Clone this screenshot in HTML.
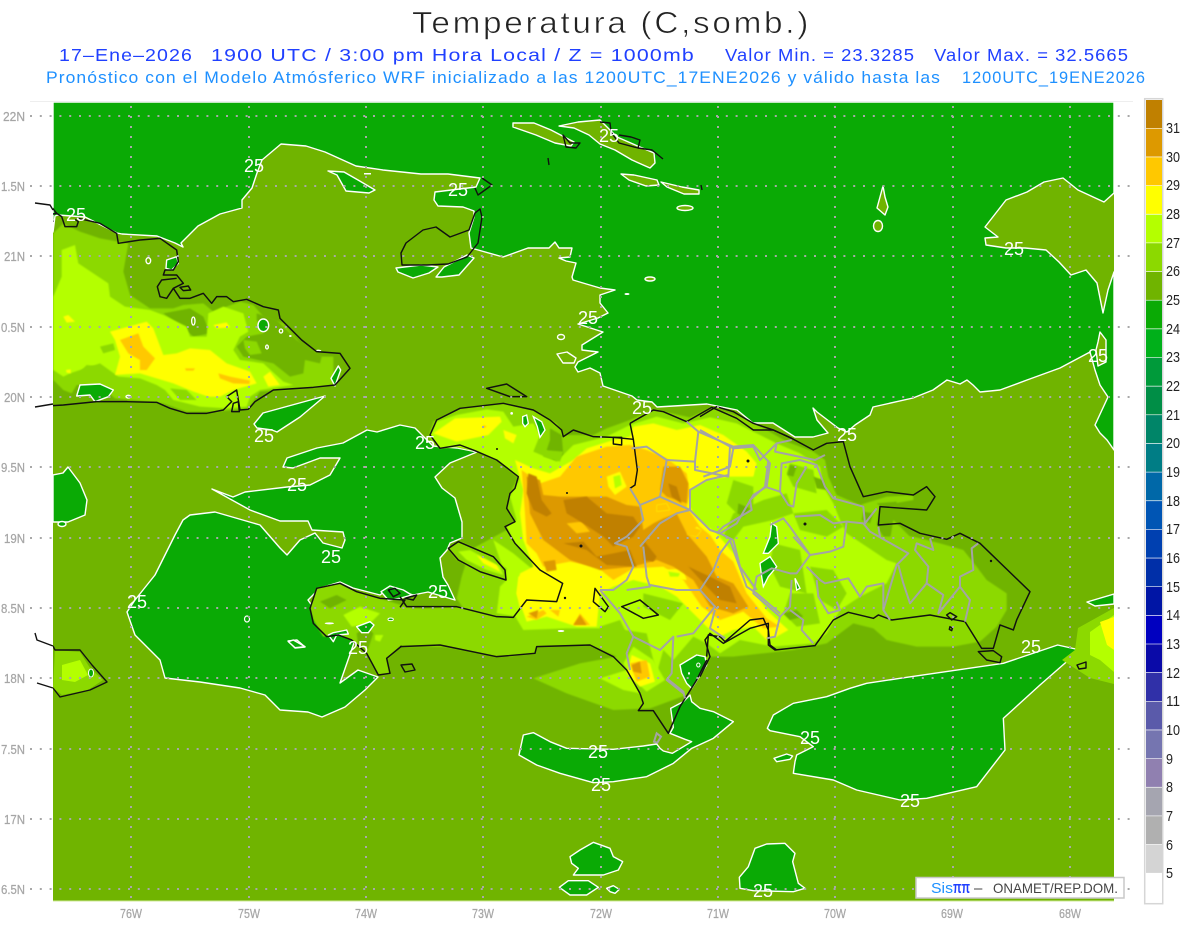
<!DOCTYPE html>
<html><head><meta charset="utf-8"><title>Temperatura</title>
<style>
html,body{margin:0;padding:0;background:#fff;width:1200px;height:927px;overflow:hidden}
svg{display:block}
text{font-family:"Liberation Sans",sans-serif}
.a{fill:#70b400}.b{fill:#8cd900}.c{fill:#b4ff00}.d{fill:#ffff00}.e{fill:#ffc800}.f{fill:#dd9900}.g{fill:#c08000}.h{fill:#0aaa05}
.z .a,.z .b,.z .c,.z .d,.z .e,.z .f,.z .g{filter:url(#s)}
.w{fill:#0aaa05;stroke:#fff;stroke-width:1.4;stroke-linejoin:round}
.wa{fill:#70b400;stroke:#fff;stroke-width:1.4;stroke-linejoin:round}
.z .w,.z .wa{stroke-width:4.2}
.k{fill:none;stroke:#111;stroke-width:1.4;stroke-linejoin:round}
.z .k{stroke-width:4.4}
.gr{fill:none;stroke:#a4a4a4;stroke-width:6;stroke-linejoin:round}
.l{fill:#fff;font-size:18px;text-anchor:middle}
.y{fill:#a6a6a6;font-size:13px;stroke:#a6a6a6;stroke-width:.25}
.n{fill:#222;font-size:15px}
</style></head><body>
<svg width="1200" height="927" viewBox="0 0 1200 927" xmlns="http://www.w3.org/2000/svg">
<defs><clipPath id="m"><rect x="53" y="102" width="1061" height="799"/></clipPath>
<filter id="s" x="-5%" y="-5%" width="110%" height="110%"><feGaussianBlur stdDeviation="2"/></filter></defs>

<text x="412" y="33" font-size="31" fill="#222" stroke="#fff" stroke-width=".6" letter-spacing="2.5" textLength="399" lengthAdjust="spacingAndGlyphs">Temperatura (C,somb.)</text>
<g fill="#2040ff" font-size="17.5" letter-spacing="1">
<text x="59" y="61" textLength="134" lengthAdjust="spacingAndGlyphs">17–Ene–2026</text>
<text x="211" y="61" textLength="484" lengthAdjust="spacingAndGlyphs">1900 UTC / 3:00 pm Hora Local / Z = 1000mb</text>
<text x="725" y="61" textLength="190" lengthAdjust="spacingAndGlyphs">Valor Min. = 23.3285</text>
<text x="934" y="61" textLength="195" lengthAdjust="spacingAndGlyphs">Valor Max. = 32.5665</text>
</g>
<g fill="#1e90ff" font-size="16.5" letter-spacing="1">
<text x="46" y="83" textLength="895" lengthAdjust="spacingAndGlyphs">Pronóstico con el Modelo Atmósferico WRF inicializado a las 1200UTC_17ENE2026 y válido hasta las</text>
<text x="962" y="83" textLength="184" lengthAdjust="spacingAndGlyphs">1200UTC_19ENE2026</text>
</g>

<rect x="30" y="101" width="1103" height="1" fill="#eeeeee"/>
<g clip-path="url(#m)">
<rect x="53" y="102" width="1061" height="799" class="a"/>

<!-- top green -->
<path class="w" d="M53,102 L1114,102 1114,193 1104,202 1078,190 1063,178 1044,182 1027,192 1006,200 985,227 998,237 985,238 986,245 1006,248 1025,248 1046,250 1059,262 1071,275 1086,270 1097,283 1103,313 1108,290 1114,272 1114,450 1107,440 1100,433 1095,425 1108,397 1100,385 1095,370 1090,352 1060,368 1027,380 1000,390 980,392 973,385 967,380 960,384 947,380 933,390 913,398 873,407 870,415 855,425 847,432 838,428 817,412 813,408 817,420 828,433 813,437 795,437 773,423 753,423 737,410 707,404 657,407 652,402 637,400 632,396 603,386 600,373 590,368 578,372 575,367 578,362 598,352 582,350 582,345 603,332 578,324 598,318 608,313 600,303 600,295 615,290 600,288 583,283 573,280 572,277 576,263 566,261 559,258 570,257 572,248 559,248 555,242 549,248 528,248 503,257 471,248 469,233 474,217 474,211 463,207 438,206 434,200 435,192 476,187 480,178 448,174 421,174 383,170 356,166 325,152 306,146 281,144 262,160 257,173 252,188 242,200 242,208 220,214 198,226 181,243 183,247 175,243 157,236 122,234 117,233 85,217 58,215 55,216 53,232 Z"/>

<!-- olive islets in green -->
<path class="wa" d="M513,123 534,123 551,130 574,142 571,146 555,143 536,135 513,127Z"/>
<path class="wa" d="M559,126 578,122 600,120 617,137 640,147 654,153 655,163 650,168 632,160 615,150 600,144 589,135 574,128Z"/>
<path class="wa" d="M621,174 634,175 657,180 659,185 646,186 629,180Z"/>
<path class="wa" d="M661,182 682,187 699,190 699,194 684,194 667,187Z"/>
<ellipse class="wa" cx="685" cy="208" rx="8" ry="2.5"/>
<path class="wa" d="M883,186 885,197 888,207 885,215 877,208 880,197Z"/>
<ellipse class="wa" cx="878" cy="226" rx="4.5" ry="5.5"/>
<ellipse class="wa" cx="650" cy="279" rx="5" ry="2"/>
<ellipse class="wa" cx="561" cy="337" rx="3.5" ry="2.5"/>
<path class="wa" d="M557,354 567,352 576,358 574,363 563,363Z"/>
<path class="wa" d="M1100,332 1106,340 1106,362 1098,366 1096,350 1098,342Z"/>
<ellipse cx="627" cy="294" rx="2.5" ry="1" fill="#fff"/>
<rect x="364" y="173" width="7" height="1.5" fill="#fff"/>

<!-- green in olive, north -->
<path class="w" d="M328,171 344,172 358,180 375,190 369,193 346,191 337,175Z"/>
<path class="w" d="M396,268 421,265 438,267 429,273 413,278 398,272Z"/>
<path class="w" d="M436,277 444,267 467,255 474,258 459,275 442,277Z"/>
<path class="w" d="M53,475 63,473 68,467 80,483 87,500 85,515 68,522 53,522Z"/>
<ellipse class="wa" cx="62" cy="524" rx="4" ry="2.5" style="fill:#0aaa05"/>
<path class="w" d="M254,424 263,413 325,396 300,417 277,432 272,430 257,428Z"/>

<!-- SW large green -->
<path class="w" d="M400,425 415,428 433,446 457,448 477,452 450,463 435,477 442,488 455,498 462,522 462,538 450,543 447,550 440,558 443,577 448,585 455,600 428,592 413,595 390,587 380,595 353,588 340,582 320,588 308,600 315,610 333,610 348,623 363,627 373,622 363,632 355,640 348,660 340,683 358,670 378,677 365,690 345,707 322,717 308,712 280,710 265,695 240,688 200,682 165,678 160,660 135,635 127,612 135,600 155,575 175,535 183,520 190,515 215,512 260,525 280,548 287,555 300,540 315,533 323,543 342,548 345,540 343,532 312,530 308,521 280,521 250,510 212,489 233,497 245,492 287,487 310,485 330,475 340,458 320,458 293,468 283,467 287,458 317,448 343,443 367,430 377,432Z"/>
<path class="wa" d="M288,641 297,640 305,647 295,648Z"/>
<ellipse cx="247" cy="619" rx="2.5" ry="3" fill="none" stroke="#fff" stroke-width="1.2"/>

<!-- SE green lobes, zoom12 coords -->
<g class="z" transform="translate(500,640) scale(.33333)">
<path class="w" d="M57,345 70,285 100,278 150,305 200,325 340,328 430,318 470,312 480,325 490,333 517,340 575,305 555,298 510,280 520,262 512,205 550,185 570,165 575,185 600,205 640,215 700,245 640,295 575,325 520,370 440,410 340,425 280,428 180,400 110,375Z"/>
<path class="w" d="M802,265 820,225 880,190 980,170 1050,145 1100,130 1200,115 1510,70 1673,15 1740,30 1620,135 1510,235 1515,330 1430,440 1280,475 1200,480 1070,450 1000,420 880,400 885,365 890,345 940,320 900,290 810,272Z"/>
<path class="w" d="M822,355 860,342 878,348 870,358 830,365Z"/>
<path class="w" d="M210,650 240,630 280,607 330,625 340,650 368,665 355,690 310,705 220,705 235,685 215,670Z"/>
<path class="w" d="M178,742 205,722 265,722 295,742 260,765 210,765Z"/>
<path class="w" d="M320,745 340,737 358,748 345,760 330,755Z"/>
<path class="w" d="M765,625 800,612 855,610 885,640 878,665 895,730 915,745 880,755 760,752 720,745 718,712 745,680Z"/>
</g>

<!-- NE bottom right coloured -->
<path class="w" d="M1087,602 1114,594 1114,604 1095,606Z"/>
<path class="b" d="M1078,628 1114,608 1114,684 1090,678 1062,660 1075,650Z"/>
<path class="c" d="M1090,632 1114,615 1114,672 1100,660 1090,655Z"/>
<path class="d" d="M1100,622 1114,617 1114,650 1107,645Z"/>
<path class="k" d="M1077,665 1086,662 1086,668 1079,669Z"/>

<!-- Jamaica -->
<path class="b" d="M55,650 80,652 90,668 103,680 88,690 62,695 53,688Z"/>
<path class="c" d="M62,665 80,660 88,675 75,682 62,680Z"/>
<ellipse cx="91" cy="673" rx="2.5" ry="4" fill="#0aaa05" stroke="#fff"/>

<!-- Cuba, zoom 8 coords -->
<g class="z" transform="translate(0,200) scale(.33333)">
<path class="b" d="M160,100 190,70 240,95 300,115 385,130 370,215 390,285 450,325 520,325 550,315 610,310 640,335 720,305 760,315 790,350 850,370 900,430 960,470 1000,470 1000,555 930,565 780,575 745,625 650,635 560,635 490,610 400,600 345,595 300,555 230,555 215,580 190,570 160,540Z"/>
<path class="a" d="M490,340 540,375 580,410 630,400 610,350 570,325Z"/>
<path class="a" d="M770,340 830,360 890,420 965,470 960,490 915,480 910,520 870,530 820,490 730,470 710,440 740,410 790,400 770,360Z"/>
<path class="c" d="M185,150 225,135 235,190 325,250 330,290 375,320 450,330 490,345 560,380 570,410 620,410 625,340 670,320 730,340 745,395 720,410 700,450 720,480 790,490 850,545 880,555 780,570 750,590 740,620 680,625 600,620 520,600 495,570 470,555 420,535 355,530 300,490 240,510 210,520 190,530 160,510 160,290 185,230Z"/>
<path class="b" d="M300,440 340,430 345,450 310,460Z M730,420 770,425 785,460 750,465 735,445Z M510,565 560,570 590,600 540,600Z M195,540 230,525 260,495 300,500 270,525 220,545Z"/>
<path class="d" d="M330,395 440,365 460,385 490,465 530,460 570,445 630,450 680,490 750,515 770,550 700,570 660,590 625,590 580,575 520,550 470,535 420,520 345,525 360,470 345,420Z M190,350 205,345 225,365 200,368Z M640,375 680,367 690,382 650,385Z M790,530 810,515 840,555 805,560Z M198,510 212,508 212,520 200,518Z"/>
<path class="e" d="M360,420 415,400 430,440 465,475 440,510 420,510 420,480 385,460Z M655,520 690,530 750,542 748,552 700,550 660,535Z M555,505 585,505 580,512 558,512Z"/>
<path class="w" d="M230,588 240,555 300,552 340,570 325,590 285,605 270,585Z"/>
<ellipse class="w" cx="790" cy="376" rx="16" ry="19"/>
<path class="w" d="M1015,498 1022,510 1005,558 993,535Z"/>
<g fill="none" stroke="#fff" stroke-width="4">
<ellipse cx="445" cy="182" rx="7" ry="9"/><ellipse cx="580" cy="363" rx="5" ry="12"/><ellipse cx="843" cy="393" rx="5" ry="6"/><ellipse cx="801" cy="441" rx="4" ry="6"/><ellipse cx="385" cy="590" rx="7" ry="4"/>
</g>
<ellipse cx="871" cy="408" rx="4" ry="3" fill="#fff"/><ellipse cx="955" cy="452" rx="9" ry="3" fill="#fff"/>
<path class="w" d="M500,180 530,170 535,190 515,210 498,205Z"/>
</g>

<!-- Gulf & Tiburon, zoom 10 coords -->
<g class="z" transform="translate(280,520) scale(.33333)">
<path class="b" d="M570,90 680,30 720,90 800,150 850,190 830,245 740,240 700,290 620,290 560,280 530,235 545,170Z"/>
<path class="c" d="M640,60 700,100 760,150 850,190 830,245 750,240 710,290 650,280 660,200 680,180Z"/>
<path class="d" d="M715,170 770,150 845,190 840,240 760,240 725,290 710,220Z"/>
<path class="b" d="M90,265 110,205 180,190 230,215 300,235 385,262 570,285 700,295 750,370 770,385 690,410 500,380 360,380 320,420 330,460 295,465 260,400 215,360 180,345 130,350 100,300Z"/>
<path class="c" d="M420,270 500,285 570,290 700,300 745,370 700,345 600,320 560,290 500,295 430,310Z M190,285 240,260 300,280 270,310 215,320Z M285,345 310,345 300,365 285,360Z M590,300 640,310 720,350 640,330 600,320Z"/>
<path class="a" d="M510,300 550,305 545,320 515,318Z M620,340 700,360 640,365Z M120,245 170,225 200,240 150,265Z M230,340 260,320 280,340 260,400 235,380Z"/>
<path class="w" d="M415,332 465,330 448,365 430,360Z"/>
<path class="w" d="M145,345 160,338 200,330 205,342 170,345 160,365Z"/>
<path class="w" d="M230,320 270,305 282,315 265,338 245,338Z"/>
<path class="w" d="M25,365 40,360 75,380 45,383Z"/>
<ellipse cx="332" cy="298" rx="8" ry="4" fill="#0aaa05" stroke="#fff" stroke-width="3"/>
<ellipse cx="148" cy="310" rx="14" ry="3" fill="#fff"/>
<path class="w" d="M303,215 330,198 370,210 395,225 360,235 325,240Z"/>
<!-- Gonave -->
<path class="b" d="M505,85 540,65 585,85 680,145 678,178 600,155 530,120Z"/>
<path class="c" d="M535,95 570,90 660,140 670,165 620,150 560,120Z"/>
<path class="d" d="M590,105 650,135 660,155 610,130Z"/>
</g>

<!-- Hispaniola zoom 3 coords -->
<g class="z" transform="translate(400,380) scale(.33333)">
<!-- 26-27 hull -->
<path class="b" d="M85,170 100,125 180,85 320,70 400,90 470,130 490,165 580,165 620,145 690,120 760,88 870,112 935,82 1020,110 1100,150 1160,185 1240,215 1275,240 1285,290 1310,345 1380,375 1395,370 1460,350 1540,345 1540,360 1440,378 1430,435 1440,470 1540,470 1620,490 1690,510 1730,560 1760,600 1820,640 1820,690 1790,740 1740,785 1660,800 1550,800 1460,780 1420,745 1360,730 1280,790 1180,810 1000,830 930,830 905,880 860,945 750,985 640,990 500,940 400,895 540,850 650,830 570,795 410,800 405,820 290,830 130,800 0,790 0,690 170,680 345,712 380,660 470,665 488,610 420,570 345,490 315,440 345,425 320,385 330,340 355,290 290,240 225,212 170,200 120,205Z"/>
<path class="c" d="M600,895 680,870 720,940 670,930Z"/>
<path class="a" d="M450,145 485,165 490,225 460,240 440,210 450,180Z M1430,370 1490,365 1490,380 1440,378Z"/>
<!-- 27-28 main -->
<path class="c" d="M90,170 110,125 170,105 260,88 310,95 340,140 400,130 420,165 400,215 470,245 520,195 620,170 690,135 770,110 850,130 930,112 1010,130 1080,165 1130,190 1200,220 1260,260 1270,320 1300,370 1320,420 1340,460 1460,540 1490,550 1460,610 1380,650 1320,690 1280,760 1240,790 1120,800 1020,780 960,820 920,790 880,770 820,840 790,810 770,880 740,760 640,745 500,745 370,750 340,700 370,680 370,620 430,575 345,490 320,440 350,420 330,350 360,295 290,240 225,212 170,200 120,205Z"/>
<path class="c" d="M700,800 760,840 795,900 740,935 695,895 670,850Z"/>
<!-- 26-27 patches over 27-28 -->
<path class="b" d="M1000,300 1060,320 1060,390 1020,410 980,370Z M1090,360 1160,340 1180,400 1120,420 1030,440 1000,480 970,470 1000,400Z M1170,250 1240,270 1250,340 1180,320 1160,280Z M1180,400 1280,390 1330,440 1280,470 1200,450Z M1340,400 1420,420 1450,470 1500,520 1440,500 1360,460 1330,430Z M1480,420 1530,470 1540,520 1470,480Z M1120,490 1200,510 1220,640 1140,620 1110,560Z M1170,640 1240,640 1260,730 1190,740 1150,700Z M430,210 490,215 480,245 430,230Z M600,740 660,720 680,760 600,770Z M730,640 850,670 810,720 730,680Z M1230,560 1300,570 1340,640 1310,690 1260,660Z"/>
<path class="a" d="M1015,370 1050,385 1030,410 1012,400Z M1170,255 1190,260 1180,290 1162,285Z M1240,290 1270,300 1280,330 1250,325Z M1390,395 1420,400 1410,430 1385,420Z M1150,700 1190,690 1210,710 1170,720Z M645,280 660,300 650,325 635,310Z"/>
<!-- 28-29 -->
<path class="d" d="M345,240 400,265 450,280 520,240 560,205 640,180 690,170 700,140 760,130 830,150 900,135 970,165 1040,215 1070,250 1060,290 985,290 925,300 870,330 870,380 890,415 950,460 1000,520 1040,600 1100,690 1165,750 1130,770 1100,780 1060,740 1000,750 960,770 920,740 880,700 830,650 780,620 700,600 640,620 600,640 590,740 530,740 440,710 380,725 350,640 360,580 400,560 370,480 360,400 370,330Z"/>
<path class="d" d="M100,160 165,115 300,110 305,125 265,165 170,185Z M310,150 350,165 340,190 315,175Z"/>
<path class="d" d="M1020,250 1060,270 1060,285 1020,280Z"/>
<path class="d" d="M1020,600 1060,660 1030,700 1000,640Z"/>
<!-- 29-30 -->
<path class="e" d="M365,270 420,310 480,290 530,230 620,200 690,195 740,210 800,235 860,280 870,340 860,380 900,440 930,465 960,510 1000,545 1040,640 1100,715 1140,740 1090,745 1030,695 960,720 905,680 850,600 790,560 700,565 640,600 590,560 510,545 430,560 410,520 380,490 375,400 370,330Z"/>
<path class="e" d="M380,710 430,690 440,700 410,720Z M520,735 540,700 570,735Z M450,690 480,690 475,710Z M250,135 260,140 250,145Z"/>
<!-- holes -->
<path class="d" d="M620,290 660,275 680,320 645,345 625,320Z M500,430 545,425 570,455 530,460Z M770,375 800,370 810,390 770,395Z M785,570 850,565 860,600 800,595Z M890,440 905,450 890,470 870,465Z"/>
<path class="c" d="M640,290 660,285 665,315 645,325Z M510,435 535,435 530,450 512,450Z M805,575 840,580 835,590 810,590Z M820,455 835,455 830,470Z"/>
<!-- 30-31 -->
<path class="f" d="M380,290 420,300 430,345 480,350 550,350 620,350 680,375 720,380 730,450 760,430 790,415 830,400 860,460 920,530 950,590 1000,610 1045,680 1000,700 930,680 880,600 820,560 770,540 700,560 600,570 510,540 430,480 390,400Z"/>
<path class="f" d="M790,260 840,260 865,310 860,370 800,350 780,330Z"/>
<path class="f" d="M385,700 415,690 410,715Z M520,735 540,705 560,735Z M430,545 465,540 470,570 440,575Z"/>
<path class="e" d="M500,430 545,425 570,455 530,460Z M770,375 800,370 810,390 770,395Z M870,440 905,450 890,470 860,465Z"/>
<!-- 31+ -->
<path class="g" d="M385,280 410,290 425,360 455,400 440,410 400,390 380,340Z M490,360 560,350 620,400 700,410 720,440 700,470 640,500 610,470 550,430 500,400Z M490,490 550,485 590,530 640,520 690,510 710,560 620,555 560,510Z M730,480 770,530 760,545 730,540Z M865,560 930,590 990,620 1010,670 960,660 920,620Z M805,310 830,320 845,370 815,350Z"/>
<!-- south blob -->
<path class="d" d="M695,825 750,850 765,905 720,920 680,880Z"/>
<path class="e" d="M690,850 740,840 750,890 710,905Z"/>
<path class="f" d="M695,855 720,845 725,880 700,875Z"/>
<!-- lakes -->
<g fill="#0aaa05" stroke="#fff" stroke-width="4">
<path d="M368,110 380,105 385,130 375,140 368,130Z"/><path d="M400,110 425,125 435,150 420,172 412,140Z"/>
<path d="M1115,430 1130,440 1135,490 1105,520 1090,520 1110,470Z"/>
<path d="M1080,550 1110,530 1130,560 1105,590 1090,620 1085,590Z"/>
<path d="M1185,595 1200,625 1190,630Z"/>
</g>
<circle cx="335" cy="100" r="4" fill="#fff"/>
<ellipse cx="483" cy="753" rx="10" ry="3" fill="#fff"/>

<!-- coasts -->
<path class="k" d="M260,25 320,12 380,50 330,50Z"/>
<path class="k" d="M145,505 175,485 280,530 315,570 318,600 240,575 175,540Z"/>
<path class="k" d="M690,130 700,178 640,172 580,170 520,150 490,170 485,150 450,120 400,90 310,70 180,85 110,120 90,165 120,205 180,195 225,212 290,240 355,290 345,325 330,340 320,385 345,425 315,440 345,490 420,570 488,610 470,665 380,660 340,712 290,710 170,680 20,680 0,650"/>
<path class="k" d="M0,800 120,795 290,830 405,820 410,800 570,795 640,830 680,870 720,940"/>
<path class="k" d="M700,178 712,270 705,315 690,325"/>
<path class="k" d="M690,130 760,90 790,95 860,125 935,82 1010,115 1060,150 1120,150 1175,175"/>
<path class="k" d="M920,830 925,765 960,770 975,785 1050,720 1090,715 1105,750 1110,795 1130,810"/>
<path class="k" d="M640,172 665,172 665,195 640,192Z M585,625 625,680 615,695 580,665Z M665,680 720,660 775,705 730,715Z"/>
<g class="gr">
<path d="M695,205 740,200 800,240 885,245 895,155 860,125"/><path d="M895,155 1000,200 1060,195 1110,250 1100,320 1060,345 1010,430 960,460"/>
<path d="M885,245 885,270 985,290 990,200"/><path d="M800,240 780,350 870,390 930,450 960,460 1000,480"/>
<path d="M985,285 920,300 870,330 870,390"/><path d="M690,325 720,375 780,350"/>
<path d="M720,375 730,420 680,470 645,490 680,500 700,560 680,600 640,630 600,630"/>
<path d="M720,500 780,430 830,400 870,390"/><path d="M730,500 740,590 750,620 680,630"/>
<path d="M750,615 830,630 900,630 945,680 880,760 830,770"/><path d="M900,630 940,570 960,520 990,480 1040,620 1070,640 1140,700"/>
<path d="M600,630 660,700 700,770 680,820 690,870"/><path d="M700,770 780,810 820,770 815,880 800,900 850,940"/>
<path d="M945,690 930,745 975,775"/><path d="M1000,480 1020,560 1070,630"/>
</g>
</g>

<!-- SE lobes near Pedernales, zoom12 coords -->
<g class="z" transform="translate(500,640) scale(.33333)">
<path class="w" d="M540,75 590,45 615,50 620,75 575,145 560,130 545,100Z"/>
<ellipse cx="595" cy="75" rx="5" ry="6" fill="#0aaa05" stroke="#fff" stroke-width="3"/>
<ellipse cx="567" cy="100" rx="3" ry="4" fill="#fff"/>
<path class="k" d="M420,160 430,190 415,212 460,212 485,250 505,280 540,200 590,120 620,60"/>
<path d="M462,305 470,280 483,290 472,308Z" fill="none" stroke="#a4a4a4" stroke-width="6"/>
<path class="gr" d="M500,115 550,155 555,175"/>
</g>

<!-- East DR zoom 4 coords -->
<g class="z" transform="translate(700,380) scale(.33333)">
<path class="k" d="M0,110 50,80 100,95 160,130 220,150 275,175 340,210 380,190 430,185 450,260 490,350 560,335 640,345 680,320 705,350 680,390 540,380 535,435 600,430 660,460 740,478 780,460 840,490 990,635 950,720 940,750 900,735 880,805 845,805 795,725 690,705 575,720 535,705 520,715 445,697 400,720 345,797 225,810 205,795 205,730 150,745 70,790 30,760 15,780 30,830 0,890"/>
<path class="k" d="M835,815 880,812 905,830 900,848 860,840Z M740,705 750,698 770,710 755,720Z M750,740 757,745 755,752 748,748Z"/>
<g class="gr">
<path d="M0,150 100,205 160,200 180,240 230,190 275,180"/><path d="M230,190 225,215 345,240 375,225"/>
<path d="M100,205 90,260 10,290"/>
<path d="M205,240 195,320 240,335 245,250 300,240 350,255 375,320 400,355 490,380 495,430 530,385"/>
<path d="M195,320 150,360 155,390 70,440 50,460"/><path d="M240,335 265,375 280,380 290,310 320,260"/>
<path d="M285,410 360,405 400,430 440,425 430,500 390,515 330,525 270,440 250,415 210,435"/>
<path d="M280,470 330,525 290,580 270,580 215,565 170,590 160,640 240,710 225,770 200,775"/>
<path d="M320,560 360,600 375,610 445,595 480,650 500,620 550,610 550,690 570,720"/>
<path d="M440,425 490,430 510,455 625,520 590,555 550,690"/>
<path d="M595,555 610,610 630,670 680,610 730,645 715,700 780,620 810,660 795,725"/>
<path d="M680,610 685,560 645,510 650,490 700,510 690,475"/><path d="M780,620 780,590 820,570 815,505 835,490"/>
<path d="M350,600 355,650 385,700 420,690 410,665"/><path d="M270,690 310,720 305,750 340,790"/>
<path d="M240,710 270,680 275,600"/><path d="M535,440 540,470"/>
</g>
</g>

<!-- Cuba coast -->
<g class="z" transform="translate(0,200) scale(.33333)">
<path class="k" d="M105,10 150,15 170,40 140,45 160,65"/>
<path class="k" d="M170,40 185,50 195,80 230,80 235,65 225,58"/>
<path class="k" d="M235,55 300,70 350,100 355,130 420,120 480,115 530,150 535,185 520,210 495,210 490,225 530,225 550,250 520,265 500,295 480,290 472,260 485,240 530,235 M520,265 540,295 570,295 610,280 635,310 650,290 680,290 700,305 740,298 790,320 835,330 840,355 905,420 950,455 1020,460 1050,505 1005,555 940,562 820,570 765,605 745,628 720,630 710,570 680,590 695,605 670,630 620,640 560,640 510,625 470,607 380,605 290,605 190,615 105,620"/>
<path class="k" d="M540,262 565,258 572,270 550,272Z M695,635 700,610 715,605 718,635Z"/>
</g>
<!-- other black -->
<path class="k" d="M471,252 478,243 482,217 480,209 475,213 469,230 450,237 436,227 423,230 406,243 401,253 402,265 427,265 448,264 467,257 471,252"/>
<path class="k" d="M482,178 492,185 478,195 475,188"/>
<path class="k" d="M563,135 570,143 580,143 576,148 566,147Z"/>
<path class="k" d="M548,158 549,165"/>
<path class="k" d="M600,122 610,123 611,132 619,143 638,148 640,140 631,137 619,135 M638,148 652,150 663,159"/>
<path class="k" d="M701,185 702,190"/>
<path class="k" d="M53,646 55,650 80,650 92,665 107,682 90,690 60,697 53,688"/>
<path class="k" d="M401,665 412,664 415,670 405,672Z"/>
<!-- small dark dots -->
<g fill="#111"><circle cx="581" cy="546" r="1.5"/><circle cx="567" cy="493" r="1"/><circle cx="497" cy="449" r="1"/><circle cx="748" cy="461" r="1.5"/><circle cx="805" cy="524" r="1.5"/><circle cx="991" cy="561" r="1.2"/><circle cx="565" cy="598" r="1.2"/></g>
<!-- Tiburon coast, zoom 10 -->
<g class="z" transform="translate(280,520) scale(.33333)">
<path class="k" d="M360,262 375,240 300,235 230,215 180,190 110,205 90,265 100,310 140,350 175,345 215,360 260,400 295,465 330,460 320,415 365,378"/>
<path class="k" d="M325,210 345,205 360,220 340,230Z M375,235 410,225 400,240Z"/>
</g>
</g>

<!-- grid -->
<g stroke="#a8a8a8" stroke-width="2" stroke-dasharray="2 7.8" fill="none">
<path d="M30,116H1134M30,186H1134M30,256H1134M30,327H1134M30,397H1134M30,467H1134M30,538H1134M30,608H1134M30,678H1134M30,749H1134M30,819H1134M30,889H1134"/>
<path d="M131,106V906M249,106V906M366,106V906M483,106V906M601,106V906M718,106V906M835,106V906M953,106V906M1070,106V906" stroke-dasharray="2 8"/>
</g>

<!-- contour labels -->
<g class="l">
<text x="254" y="172" class="l">25</text><text x="458" y="196" class="l">25</text><text x="76" y="221" class="l">25</text>
<text x="609" y="142" class="l">25</text><text x="1014" y="255" class="l">25</text><text x="588" y="324" class="l">25</text>
<text x="1098" y="362" class="l">25</text><text x="642" y="414" class="l">25</text><text x="847" y="441" class="l">25</text>
<text x="264" y="442" class="l">25</text><text x="425" y="449" class="l">25</text><text x="297" y="491" class="l">25</text>
<text x="331" y="563" class="l">25</text><text x="137" y="608" class="l">25</text><text x="438" y="598" class="l">25</text>
<text x="358" y="654" class="l">25</text><text x="1031" y="653" class="l">25</text><text x="810" y="744" class="l">25</text>
<text x="598" y="758" class="l">25</text><text x="601" y="791" class="l">25</text><text x="910" y="807" class="l">25</text><text x="763" y="897" class="l">25</text>
</g>

<!-- outside coast stubs -->
<path class="k" d="M35,203 50,205 53,210M35,407 53,404M35,633 37,640 53,646M37,683 53,688" />
<rect x="53" y="900.5" width="1061" height="1" fill="#cfe89a"/>

<!-- axis labels -->
<g class="y">
<text x="3" y="121" textLength="22" lengthAdjust="spacingAndGlyphs">22N</text>
<text x="1" y="191" textLength="24" lengthAdjust="spacingAndGlyphs">1.5N</text>
<text x="4" y="261" textLength="21" lengthAdjust="spacingAndGlyphs">21N</text>
<text x="1" y="332" textLength="24" lengthAdjust="spacingAndGlyphs">0.5N</text>
<text x="4" y="402" textLength="21" lengthAdjust="spacingAndGlyphs">20N</text>
<text x="1" y="472" textLength="24" lengthAdjust="spacingAndGlyphs">9.5N</text>
<text x="4" y="543" textLength="21" lengthAdjust="spacingAndGlyphs">19N</text>
<text x="1" y="613" textLength="24" lengthAdjust="spacingAndGlyphs">8.5N</text>
<text x="4" y="683" textLength="21" lengthAdjust="spacingAndGlyphs">18N</text>
<text x="1" y="754" textLength="24" lengthAdjust="spacingAndGlyphs">7.5N</text>
<text x="4" y="824" textLength="21" lengthAdjust="spacingAndGlyphs">17N</text>
<text x="1" y="894" textLength="24" lengthAdjust="spacingAndGlyphs">6.5N</text>
<text x="120" y="918" textLength="22" lengthAdjust="spacingAndGlyphs">76W</text>
<text x="238" y="918" textLength="22" lengthAdjust="spacingAndGlyphs">75W</text>
<text x="355" y="918" textLength="22" lengthAdjust="spacingAndGlyphs">74W</text>
<text x="472" y="918" textLength="22" lengthAdjust="spacingAndGlyphs">73W</text>
<text x="590" y="918" textLength="22" lengthAdjust="spacingAndGlyphs">72W</text>
<text x="707" y="918" textLength="22" lengthAdjust="spacingAndGlyphs">71W</text>
<text x="824" y="918" textLength="22" lengthAdjust="spacingAndGlyphs">70W</text>
<text x="941" y="918" textLength="22" lengthAdjust="spacingAndGlyphs">69W</text>
<text x="1059" y="918" textLength="22" lengthAdjust="spacingAndGlyphs">68W</text>
</g>

<!-- legend -->
<rect x="1144.7" y="98.7" width="18" height="805" fill="#fff" stroke="#d6d6d6" stroke-width="1.5"/>
<g>
<rect x="1146" y="100" width="16" height="28" fill="#c08000"/>
<rect x="1146" y="128.6" width="16" height="28" fill="#dd9900"/>
<rect x="1146" y="157.3" width="16" height="28" fill="#ffc800"/>
<rect x="1146" y="185.9" width="16" height="28" fill="#ffff00"/>
<rect x="1146" y="214.6" width="16" height="28" fill="#b4ff00"/>
<rect x="1146" y="243.2" width="16" height="28" fill="#8cd900"/>
<rect x="1146" y="271.9" width="16" height="28" fill="#70b400"/>
<rect x="1146" y="300.5" width="16" height="28" fill="#0aaa05"/>
<rect x="1146" y="329.2" width="16" height="28" fill="#00b01a"/>
<rect x="1146" y="357.8" width="16" height="28" fill="#009a3a"/>
<rect x="1146" y="386.5" width="16" height="28" fill="#008e46"/>
<rect x="1146" y="415.1" width="16" height="28" fill="#008568"/>
<rect x="1146" y="443.8" width="16" height="28" fill="#007d85"/>
<rect x="1146" y="472.4" width="16" height="28" fill="#0068a8"/>
<rect x="1146" y="501.1" width="16" height="28" fill="#0055b4"/>
<rect x="1146" y="529.7" width="16" height="28" fill="#0040b0"/>
<rect x="1146" y="558.4" width="16" height="28" fill="#002fa8"/>
<rect x="1146" y="587" width="16" height="28" fill="#0015a5"/>
<rect x="1146" y="615.7" width="16" height="28" fill="#0000c0"/>
<rect x="1146" y="644.3" width="16" height="28" fill="#0a0aa8"/>
<rect x="1146" y="673" width="16" height="28" fill="#3030a8"/>
<rect x="1146" y="701.6" width="16" height="28" fill="#5a5aaa"/>
<rect x="1146" y="730.3" width="16" height="28" fill="#7575b0"/>
<rect x="1146" y="758.9" width="16" height="28" fill="#9080b0"/>
<rect x="1146" y="787.6" width="16" height="28" fill="#a5a5b0"/>
<rect x="1146" y="816.2" width="16" height="28" fill="#b0b0b0"/>
<rect x="1146" y="844.9" width="16" height="28" fill="#d4d4d4"/>
<rect x="1146" y="873.5" width="16" height="29" fill="#ffffff"/>
</g>
<g class="n">
<text x="1166" y="133" textLength="14" lengthAdjust="spacingAndGlyphs">31</text><text x="1166" y="162" textLength="14" lengthAdjust="spacingAndGlyphs">30</text><text x="1166" y="190" textLength="14" lengthAdjust="spacingAndGlyphs">29</text>
<text x="1166" y="219" textLength="14" lengthAdjust="spacingAndGlyphs">28</text><text x="1166" y="248" textLength="14" lengthAdjust="spacingAndGlyphs">27</text><text x="1166" y="276" textLength="14" lengthAdjust="spacingAndGlyphs">26</text>
<text x="1166" y="305" textLength="14" lengthAdjust="spacingAndGlyphs">25</text><text x="1166" y="334" textLength="14" lengthAdjust="spacingAndGlyphs">24</text><text x="1166" y="362" textLength="14" lengthAdjust="spacingAndGlyphs">23</text>
<text x="1166" y="391" textLength="14" lengthAdjust="spacingAndGlyphs">22</text><text x="1166" y="420" textLength="14" lengthAdjust="spacingAndGlyphs">21</text><text x="1166" y="448" textLength="14" lengthAdjust="spacingAndGlyphs">20</text>
<text x="1166" y="477" textLength="14" lengthAdjust="spacingAndGlyphs">19</text><text x="1166" y="506" textLength="14" lengthAdjust="spacingAndGlyphs">18</text><text x="1166" y="534" textLength="14" lengthAdjust="spacingAndGlyphs">17</text>
<text x="1166" y="563" textLength="14" lengthAdjust="spacingAndGlyphs">16</text><text x="1166" y="592" textLength="14" lengthAdjust="spacingAndGlyphs">15</text><text x="1166" y="620" textLength="14" lengthAdjust="spacingAndGlyphs">14</text>
<text x="1166" y="649" textLength="14" lengthAdjust="spacingAndGlyphs">13</text><text x="1166" y="678" textLength="14" lengthAdjust="spacingAndGlyphs">12</text><text x="1166" y="706" textLength="14" lengthAdjust="spacingAndGlyphs">11</text>
<text x="1166" y="735" textLength="14" lengthAdjust="spacingAndGlyphs">10</text><text x="1166" y="764" textLength="7" lengthAdjust="spacingAndGlyphs">9</text><text x="1166" y="792" textLength="7" lengthAdjust="spacingAndGlyphs">8</text>
<text x="1166" y="821" textLength="7" lengthAdjust="spacingAndGlyphs">7</text><text x="1166" y="850" textLength="7" lengthAdjust="spacingAndGlyphs">6</text><text x="1166" y="878" textLength="7" lengthAdjust="spacingAndGlyphs">5</text>
</g>

<!-- footer -->
<rect x="916" y="877.5" width="208" height="20.5" fill="#fff" stroke="#c8c8c8" stroke-width="1.5"/>
<text x="931" y="893" font-size="15" fill="#1e90ff" textLength="22" lengthAdjust="spacingAndGlyphs">Sis</text>
<text x="953" y="893" font-size="17" font-weight="bold" fill="#2040ff" textLength="17" lengthAdjust="spacingAndGlyphs">ππ</text>
<text x="974" y="893" font-size="15" fill="#444">–</text>
<text x="993" y="893" font-size="14" fill="#444" textLength="125" lengthAdjust="spacingAndGlyphs">ONAMET/REP.DOM.</text>
</svg>
</body></html>
